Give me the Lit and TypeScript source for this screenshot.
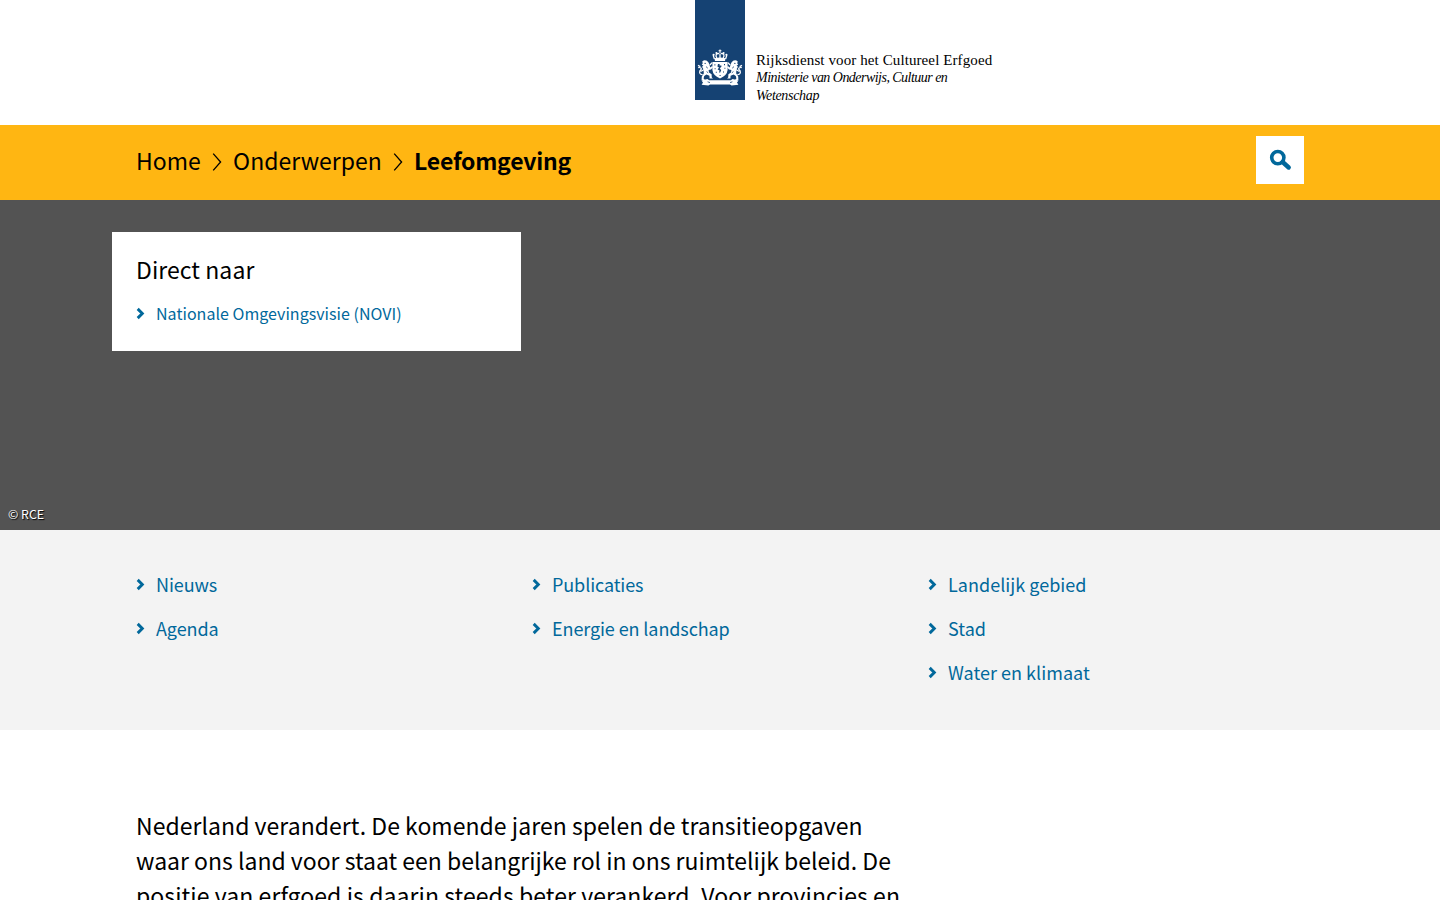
import { LitElement, html, css, svg } from "lit";
import { customElement } from "lit/decorators.js";

const chevron = html`<svg class="chevron" width="9" height="13" viewBox="0 0 9 13">
  <path d="M1.7 1.9 L6.3 6.5 L1.7 11.1" fill="none" stroke="currentColor" stroke-width="2.9" />
</svg>`;

const separator = html`<svg class="separator" width="10" height="18" viewBox="0 0 10 18">
  <path d="M1.2 .6 L8.6 9 L1.2 17.4" fill="none" stroke="currentColor" stroke-width="1.3" />
</svg>`;

const lion = svg`
  <path d="M5.2 12.4 L7 11.2 L9.4 11.6 L11.2 13 L12.4 15.2 L13.2 18.4 L15.2 17 L16 18.2 L14 20.4 L11.6 21 L12 23.4 L14.6 25.2 L14.8 28.4 L16 29.6 L12.6 29.6 L12.4 26.8 L9.4 25.6 L7.2 27 L6.6 29.4 L8 31 L4.6 31 L4.8 27.4 L6.8 24.6 L6.6 20.6 L5 17.8 L6.4 16.8 L4.8 15.4 L5.8 14.2 Z" />
  <path d="M5.6 25.6 C1.6 25.4 2.2 21.8 4 20.6 C5 19.4 3.6 18.2 1.2 18.6 M1 16.4 L3.4 17.6 M7.2 20.6 L3.6 22.6 M13 16 L15 13.6" fill="none" stroke="#fff" stroke-width="1.2" />
  <path d="M7.4 14.4 h1.6 M9 17.6 l1.8 1.6 M9.6 22.6 l1.6 1.2" stroke="#154273" stroke-width=".8" />`;

const arms = html`<svg class="arms" width="46" height="38" viewBox="0 0 46 38" fill="#fff">
  <g>${lion}</g>
  <g transform="translate(46 0) scale(-1 1)">${lion}</g>
  <path d="M23 .6 V4 M21.6 1.8 H24.4" stroke="#fff" stroke-width="1.1" />
  <path d="M17.4 10 L16.2 6.2 M28.6 10 L29.8 6.2 M19.8 9 C18 6 19.4 4 22 4.6 M26.2 9 C28 6 26.6 4 24 4.6 M23 4.4 V9" fill="none" stroke="#fff" stroke-width="1.3" />
  <circle cx="16.6" cy="5.8" r="1.1" /><circle cx="29.4" cy="5.8" r="1.1" />
  <circle cx="19.4" cy="4" r="1" /><circle cx="26.6" cy="4" r="1" />
  <path d="M17.4 9.2 Q23 7.8 28.6 9.2 L28 12 H18 Z" />
  <path d="M15.4 13 H30.6 V21 Q30 26.6 23 29.4 Q16 26.6 15.4 21 Z" />
  <g fill="#154273">
    <path d="M21 15 h1.6 v1.4 h1.8 v1.4 l-1.6 1.4 1.4 2 -1 2.4 h-1.2 l.6 -2.2 -2 -.8 1.4 -2 -1.6 -1.2 z" />
    <path d="M17.4 15.2 h1 v1.2 h-1 z M27 15 h1 v1.2 h-1 z M17.6 19.2 h1 v1 h-1 z M27.4 18.8 h1 v1 h-1 z M18.8 22.8 h1 v1 h-1 z M26 22.6 h1 v1 h-1 z M22.6 26 h1 v1 h-1 z" />
  </g>
  <path d="M4.4 31.4 L10.4 30 L12.2 31.2 H33.8 L35.6 30 L41.6 31.4 L40 33.4 L41.4 35.8 L34.6 36.6 L33 35.6 H13 L11.4 36.6 L4.6 35.8 L6 33.4 Z" />
  <path d="M10.6 32.8 L13 33.6 M35.4 32.8 L33 33.6" stroke="#154273" stroke-width=".8" />
</svg>`;

const linkColumns = [
  ["Nieuws", "Agenda"],
  ["Publicaties", "Energie en landschap"],
  ["Landelijk gebied", "Stad", "Water en klimaat"],
];

@customElement("app-root")
export class AppRoot extends LitElement {
  static styles = css`
    :host {
      display: block;
      height: 900px;
      overflow: hidden;
      background: #fff;
      color: #000;
      font-family: "Noto Sans CJK SC", "Noto Sans", sans-serif;
      font-size: 23px;
    }
    svg { display: block; flex: none; }
    a { color: inherit; text-decoration: none; white-space: nowrap; }
    h2, p, ul { margin: 0; padding: 0; font-weight: 400; }
    ul { list-style: none; }

    .header { display: flex; height: 125px; padding-left: 695px; }
    .ribbon {
      display: flex;
      justify-content: center;
      align-items: flex-end;
      box-sizing: border-box;
      width: 50px;
      height: 100px;
      padding-bottom: 13px;
      background: #154273;
    }
    .wordmark {
      padding: 51px 0 0 11px;
      font: 15px/18px "Liberation Serif", serif;
      white-space: nowrap;
    }
    .org { letter-spacing: 0.1px; }
    .ministry { font-size: 14px; font-style: italic; letter-spacing: -0.53px; }
    .ministry .tail { letter-spacing: -0.33px; }

    .bar {
      display: flex;
      justify-content: space-between;
      box-sizing: border-box;
      height: 75px;
      padding: 11px 136px 0;
      background: #ffb612;
    }
    .crumbs { display: flex; height: 48px; line-height: 48px; }
    .crumbs a { letter-spacing: 0.03px; }
    .crumbs .separator { margin: 17px 11px 0 11.2px; }
    .crumbs .current { font-weight: 700; letter-spacing: -0.24px; }
    .search {
      display: grid;
      place-items: center;
      width: 48px;
      height: 48px;
      padding: 0;
      border: 0;
      background: #fff;
      color: #01689b;
    }

    .hero {
      display: flex;
      flex-direction: column;
      justify-content: space-between;
      align-items: flex-start;
      box-sizing: border-box;
      height: 330px;
      padding: 32px 0 6px;
      background: #535353;
    }
    .card {
      box-sizing: border-box;
      width: 409px;
      height: 119px;
      margin-left: 112px;
      padding: 20px 24px;
      background: #fff;
    }
    .card h2 { font-size: 23px; line-height: 34px; letter-spacing: 0.06px; }
    .link { display: flex; align-items: center; color: #01689b; }
    .link .chevron { margin-right: 11px; }
    .card .link { height: 24px; margin-top: 15px; font-size: 16px; letter-spacing: 0.03px; }
    .credit {
      padding-left: 8px;
      color: #fff;
      font-size: 12.4px;
      line-height: 20px;
      text-shadow: 1px 1px 1px #000;
    }

    .links {
      display: grid;
      grid-template-columns: repeat(3, 396px);
      box-sizing: border-box;
      height: 200px;
      padding: 32px 136px 0;
      background: #f3f3f3;
    }
    .links .link { height: 44px; font-size: 18px; letter-spacing: -0.1px; }
    .links ul:last-child .link { letter-spacing: 0.03px; }

    .intro {
      width: 780px;
      padding: 78px 0 0 136px;
      line-height: 35px;
      letter-spacing: 0.04px;
    }
    .intro .tight { letter-spacing: -0.01px; }
    .intro .loose { letter-spacing: 0.07px; }
  `;

  private link(label: string) {
    return html`<a class="link" href="#">${chevron}<span>${label}</span></a>`;
  }

  render() {
    return html`
      <header class="header">
        <div class="ribbon">${arms}</div>
        <div class="wordmark">
          <div class="org">Rijksdienst voor het Cultureel Erfgoed</div>
          <div class="ministry">Ministerie van Onderwijs, Cultuur en<br /><span class="tail">Wetenschap</span></div>
        </div>
      </header>
      <div class="bar">
        <nav class="crumbs">
          <a href="#">Home</a>${separator}
          <a href="#">Onderwerpen</a>${separator}
          <span class="current">Leefomgeving</span>
        </nav>
        <button class="search" aria-label="Zoeken">
          <svg width="24" height="24" viewBox="0 0 24 24" fill="none" stroke="currentColor">
            <circle cx="9.8" cy="9.6" r="6.1" stroke-width="3.6" />
            <path d="M14.6 14 L20.7 19.5" stroke-width="4.4" stroke-linecap="round" />
          </svg>
        </button>
      </div>
      <section class="hero">
        <div class="card">
          <h2>Direct naar</h2>
          ${this.link("Nationale Omgevingsvisie (NOVI)")}
        </div>
        <div class="credit">© RCE</div>
      </section>
      <nav class="links">
        ${linkColumns.map((column) => html`<ul>${column.map((label) => html`<li>${this.link(label)}</li>`)}</ul>`)}
      </nav>
      <p class="intro">
        Nederland verandert. De komende jaren spelen de transitieopgaven
        <span class="tight">waar ons land voor staat een belangrijke rol in ons ruimtelijk beleid. De</span>
        <span class="loose">positie van erfgoed is daarin steeds beter verankerd. Voor provincies en</span>
      </p>
    `;
  }
}
